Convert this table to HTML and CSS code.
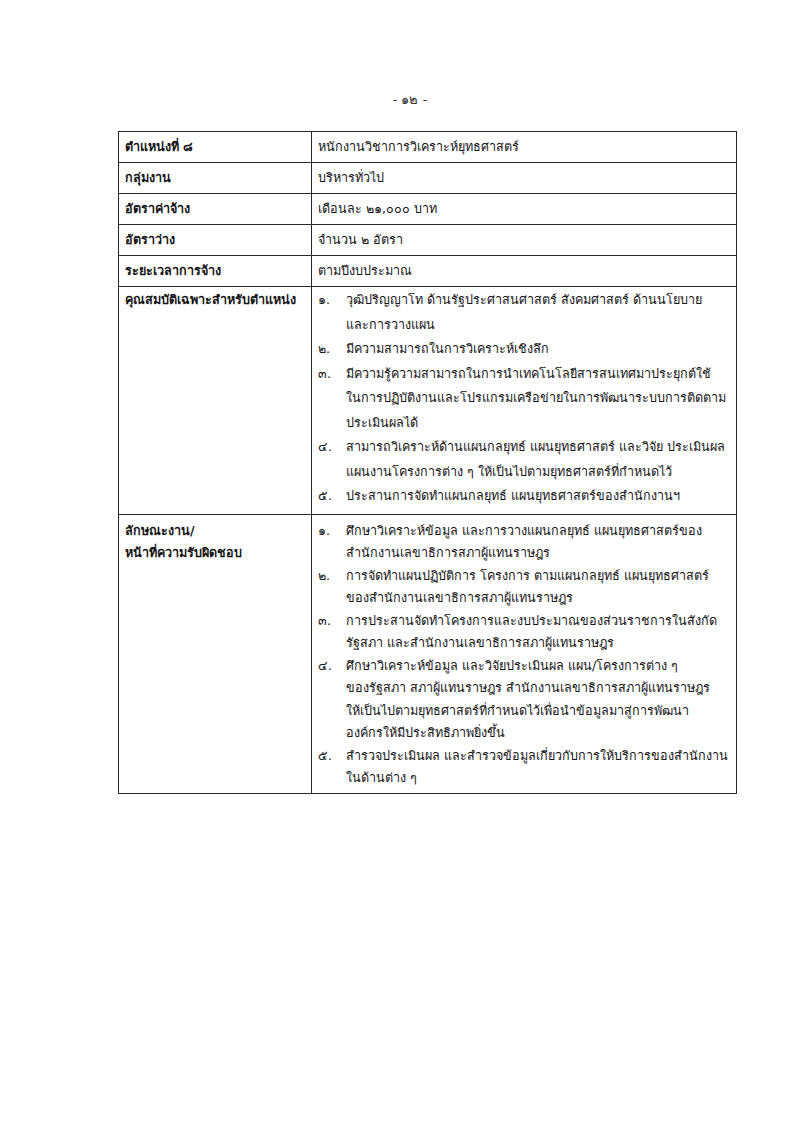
FILE: index.html
```html
<!DOCTYPE html>
<html lang="th">
<head>
<meta charset="utf-8">
<title>ตำแหน่งที่ ๘</title>
<link rel="stylesheet" href="styles.css">
</head>
<body>
<div class="page">
  <div class="pagenum">- ๑๒ -</div>
  <table class="spec">
    <colgroup><col class="c-label"><col class="c-value"></colgroup>
    <tr class="short"><th>ตำแหน่งที่ ๘</th><td>หนักงานวิชาการวิเคราะห์ยุทธศาสตร์</td></tr>
    <tr class="short"><th>กลุ่มงาน</th><td>บริหารทั่วไป</td></tr>
    <tr class="short"><th>อัตราค่าจ้าง</th><td>เดือนละ ๒๑,๐๐๐ บาท</td></tr>
    <tr class="short"><th>อัตราว่าง</th><td>จำนวน ๒ อัตรา</td></tr>
    <tr class="short"><th>ระยะเวลาการจ้าง</th><td>ตามปีงบประมาณ</td></tr>
    <tr class="long qual">
      <th>คุณสมบัติเฉพาะสำหรับตำแหน่ง</th>
      <td>
        <ol class="items">
          <li><span class="num">๑.</span><span class="txt">วุฒิปริญญาโท ด้านรัฐประศาสนศาสตร์ สังคมศาสตร์ ด้านนโยบาย<br>และการวางแผน</span></li>
          <li><span class="num">๒.</span><span class="txt">มีความสามารถในการวิเคราะห์เชิงลึก</span></li>
          <li><span class="num">๓.</span><span class="txt">มีความรู้ความสามารถในการนำเทคโนโลยีสารสนเทศมาประยุกต์ใช้<br>ในการปฏิบัติงานและโปรแกรมเครือข่ายในการพัฒนาระบบการติดตาม<br>ประเมินผลได้</span></li>
          <li><span class="num">๔.</span><span class="txt">สามารถวิเคราะห์ด้านแผนกลยุทธ์ แผนยุทธศาสตร์ และวิจัย ประเมินผล<br>แผนงานโครงการต่าง ๆ ให้เป็นไปตามยุทธศาสตร์ที่กำหนดไว้</span></li>
          <li><span class="num">๕.</span><span class="txt">ประสานการจัดทำแผนกลยุทธ์ แผนยุทธศาสตร์ของสำนักงานฯ</span></li>
        </ol>
      </td>
    </tr>
    <tr class="long duty">
      <th>ลักษณะงาน/<br>หน้าที่ความรับผิดชอบ</th>
      <td>
        <ol class="items">
          <li><span class="num">๑.</span><span class="txt">ศึกษาวิเคราะห์ข้อมูล และการวางแผนกลยุทธ์ แผนยุทธศาสตร์ของ<br>สำนักงานเลขาธิการสภาผู้แทนราษฎร</span></li>
          <li><span class="num">๒.</span><span class="txt">การจัดทำแผนปฏิบัติการ โครงการ ตามแผนกลยุทธ์ แผนยุทธศาสตร์<br>ของสำนักงานเลขาธิการสภาผู้แทนราษฎร</span></li>
          <li><span class="num">๓.</span><span class="txt">การประสานจัดทำโครงการและงบประมาณของส่วนราชการในสังกัด<br>รัฐสภา และสำนักงานเลขาธิการสภาผู้แทนราษฎร</span></li>
          <li><span class="num">๔.</span><span class="txt">ศึกษาวิเคราะห์ข้อมูล และวิจัยประเมินผล แผน/โครงการต่าง ๆ<br>ของรัฐสภา สภาผู้แทนราษฎร สำนักงานเลขาธิการสภาผู้แทนราษฎร<br>ให้เป็นไปตามยุทธศาสตร์ที่กำหนดไว้เพื่อนำข้อมูลมาสู่การพัฒนา<br>องค์กรให้มีประสิทธิภาพยิ่งขึ้น</span></li>
          <li><span class="num">๕.</span><span class="txt">สำรวจประเมินผล และสำรวจข้อมูลเกี่ยวกับการให้บริการของสำนักงาน<br>ในด้านต่าง ๆ</span></li>
        </ol>
      </td>
    </tr>
  </table>
</div>
</body>
</html>
```

FILE: styles.css
```css
html, body {
  margin: 0;
  padding: 0;
  background: #fff;
}

body {
  font-family: "DejaVu Sans", "Noto Sans", sans-serif;
  color: #151515;
}

.page {
  width: 800px;
  height: 1124px;
  padding-top: 90px;
  box-sizing: border-box;
}

.pagenum {
  text-align: center;
  font-size: 13px;
  line-height: 20px;
  padding-left: 20px;
  color: #333;
}

.spec {
  margin: 21px 0 0 118px;
  width: 619px;
  table-layout: fixed;
  border-collapse: collapse;
  font-size: 12.6px;
}

.spec col.c-label { width: 193px; }

.spec th,
.spec td {
  border: 1.5px solid #2a2a2a;
  vertical-align: top;
  text-align: left;
  padding: 0 6px;
}

.spec th {
  font-weight: 600;
  white-space: nowrap;
}

.spec td { font-weight: 400; }

.spec tr.short th,
.spec tr.short td {
  line-height: 30px;
  padding-top: 0;
  padding-bottom: 0;
  vertical-align: middle;
}

.spec tr.qual th,
.spec tr.qual td {
  line-height: 24.5px;
  padding-top: 1px;
  padding-bottom: 5px;
}

.spec tr.duty th,
.spec tr.duty td {
  line-height: 22.5px;
  padding-top: 5px;
  padding-bottom: 3px;
}

.items {
  list-style: none;
  margin: 0;
  padding: 0;
}

.items li {
  display: flex;
}

.items .num {
  flex: 0 0 28px;
}

.items .txt {
  flex: 1;
  white-space: nowrap;
}
```
